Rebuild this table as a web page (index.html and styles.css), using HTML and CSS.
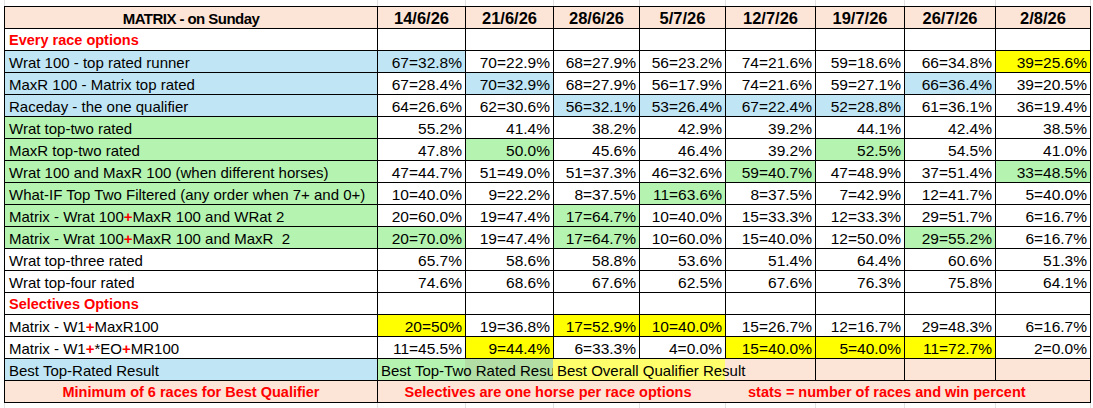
FILE: index.html
```html
<!DOCTYPE html>
<html lang="en">
<head>
<meta charset="utf-8">
<title>MATRIX - on Sunday</title>
<link rel="stylesheet" href="styles.css">
</head>
<body>
<div class="sheet">
  <div class="gridstrip"><span></span><span></span><span></span><span></span><span></span><span></span><span></span><span></span><span></span><span></span><span></span></div>
  <table class="matrix">
    <colgroup><col><col><col><col><col><col><col><col><col></colgroup>
    <tbody>
      <tr class="hdr">
        <td class="title">MATRIX - on Sunday</td>
        <td>14/6/26</td><td>21/6/26</td><td>28/6/26</td><td>5/7/26</td><td>12/7/26</td><td>19/7/26</td><td>26/7/26</td><td>2/8/26</td>
      </tr>
      <tr>
        <td class="lbl section">Every race options</td>
        <td></td><td></td><td></td><td></td><td></td><td></td><td></td><td></td>
      </tr>
      <tr>
        <td class="lbl blue">Wrat 100 - top rated runner</td>
        <td class="blue">67=32.8%</td><td>70=22.9%</td><td>68=27.9%</td><td>56=23.2%</td><td>74=21.6%</td><td>59=18.6%</td><td>66=34.8%</td><td class="yellow">39=25.6%</td>
      </tr>
      <tr>
        <td class="lbl blue">MaxR 100 - Matrix top rated</td>
        <td>67=28.4%</td><td class="blue">70=32.9%</td><td>68=27.9%</td><td>56=17.9%</td><td>74=21.6%</td><td>59=27.1%</td><td class="blue">66=36.4%</td><td>39=20.5%</td>
      </tr>
      <tr>
        <td class="lbl blue">Raceday - the one qualifier</td>
        <td>64=26.6%</td><td>62=30.6%</td><td class="blue">56=32.1%</td><td class="blue">53=26.4%</td><td class="blue">67=22.4%</td><td class="blue">52=28.8%</td><td>61=36.1%</td><td>36=19.4%</td>
      </tr>
      <tr>
        <td class="lbl green">Wrat top-two rated</td>
        <td>55.2%</td><td>41.4%</td><td>38.2%</td><td>42.9%</td><td>39.2%</td><td>44.1%</td><td>42.4%</td><td>38.5%</td>
      </tr>
      <tr>
        <td class="lbl green">MaxR top-two rated</td>
        <td>47.8%</td><td class="green">50.0%</td><td>45.6%</td><td>46.4%</td><td>39.2%</td><td class="green">52.5%</td><td>54.5%</td><td>41.0%</td>
      </tr>
      <tr>
        <td class="lbl green">Wrat 100 and MaxR 100 (when different horses)</td>
        <td>47=44.7%</td><td>51=49.0%</td><td>51=37.3%</td><td>46=32.6%</td><td class="green">59=40.7%</td><td>47=48.9%</td><td>37=51.4%</td><td class="green">33=48.5%</td>
      </tr>
      <tr>
        <td class="lbl green">What-IF Top Two Filtered (any order when 7+ and 0+)</td>
        <td>10=40.0%</td><td>9=22.2%</td><td>8=37.5%</td><td class="green">11=63.6%</td><td>8=37.5%</td><td>7=42.9%</td><td>12=41.7%</td><td>5=40.0%</td>
      </tr>
      <tr>
        <td class="lbl green">Matrix - Wrat 100<b class="plus">+</b>MaxR 100 and WRat 2</td>
        <td>20=60.0%</td><td>19=47.4%</td><td class="green">17=64.7%</td><td>10=40.0%</td><td>15=33.3%</td><td>12=33.3%</td><td>29=51.7%</td><td>6=16.7%</td>
      </tr>
      <tr>
        <td class="lbl green">Matrix - Wrat 100<b class="plus">+</b>MaxR 100 and MaxR&nbsp; 2</td>
        <td class="green">20=70.0%</td><td>19=47.4%</td><td class="green">17=64.7%</td><td>10=60.0%</td><td>15=40.0%</td><td>12=50.0%</td><td class="green">29=55.2%</td><td>6=16.7%</td>
      </tr>
      <tr>
        <td class="lbl">Wrat top-three rated</td>
        <td>65.7%</td><td>58.6%</td><td>58.8%</td><td>53.6%</td><td>51.4%</td><td>64.4%</td><td>60.6%</td><td>51.3%</td>
      </tr>
      <tr>
        <td class="lbl">Wrat top-four rated</td>
        <td>74.6%</td><td>68.6%</td><td>67.6%</td><td>62.5%</td><td>67.6%</td><td>76.3%</td><td>75.8%</td><td>64.1%</td>
      </tr>
      <tr>
        <td class="lbl section">Selectives Options</td>
        <td></td><td></td><td></td><td></td><td></td><td></td><td></td><td></td>
      </tr>
      <tr>
        <td class="lbl">Matrix - W1<b class="plus">+</b>MaxR100</td>
        <td class="yellow">20=50%</td><td>19=36.8%</td><td class="yellow">17=52.9%</td><td class="yellow">10=40.0%</td><td>15=26.7%</td><td>12=16.7%</td><td>29=48.3%</td><td>6=16.7%</td>
      </tr>
      <tr>
        <td class="lbl">Matrix - W1<b class="plus">+</b>*EO<b class="plus">+</b>MR100</td>
        <td>11=45.5%</td><td class="yellow">9=44.4%</td><td>6=33.3%</td><td>4=0.0%</td><td class="yellow">15=40.0%</td><td class="yellow">5=40.0%</td><td class="yellow">11=72.7%</td><td>2=0.0%</td>
      </tr>
      <tr class="best">
        <td class="lbl blue">Best Top-Rated Result</td>
        <td colspan="5" class="split">
          <div class="split-in">
            <span class="best-two">Best Top-Two Rated Result</span>
            <span class="best-overall">Best Overall Qualifier Result</span>
          </div>
        </td>
        <td class="peach"></td><td class="peach"></td><td class="peach"></td>
      </tr>
      <tr class="notes">
        <td class="note-title">Minimum of 6 races for Best Qualifier</td>
        <td colspan="8" class="notes-cell">
          <div class="notes-in">
            <span class="note-a">Selectives are one horse per race options</span>
            <span class="note-b">stats = number of races and win percent</span>
          </div>
        </td>
      </tr>
    </tbody>
  </table>
  <div class="gridstrip"><span></span><span></span><span></span><span></span><span></span><span></span><span></span><span></span><span></span><span></span><span></span></div>
</div>
</body>
</html>
```

FILE: styles.css
```css
* {
  box-sizing: border-box;
}

body {
  margin: 0;
  background: #ffffff;
  color: #000000;
  font-family: "Liberation Sans", Arial, sans-serif;
}

.sheet {
  width: 1093px;
}

.gridstrip {
  display: grid;
  grid-template-columns: 4px 373px 88px 88px 86px 86px 90px 89px 91px 95px 1fr;
  height: 6px;
}

.gridstrip span + span {
  border-left: 1px solid #e1e1e1;
}

.matrix {
  border-collapse: collapse;
  table-layout: fixed;
  margin-left: 4px;
  width: 1087px;
}

.matrix col:nth-child(1) { width: 373px; }
.matrix col:nth-child(2) { width: 88px; }
.matrix col:nth-child(3) { width: 88px; }
.matrix col:nth-child(4) { width: 86px; }
.matrix col:nth-child(5) { width: 86px; }
.matrix col:nth-child(6) { width: 90px; }
.matrix col:nth-child(7) { width: 89px; }
.matrix col:nth-child(8) { width: 91px; }
.matrix col:nth-child(9) { width: 95px; }

.matrix tr {
  height: 22px;
}

.matrix td {
  border: 1px solid #000000;
  padding: 0 3px 1px 3px;
  height: 22px;
  line-height: 17px;
  vertical-align: bottom;
  white-space: nowrap;
  overflow: hidden;
  font-size: 15.5px;
  text-align: right;
  background: #ffffff;
}

.matrix td.lbl {
  text-align: left;
  font-size: 15px;
  padding-left: 4px;
}

.matrix td.section {
  color: #ff0000;
  font-weight: bold;
  font-size: 14.5px;
}

.hdr td {
  background: #fce4d6;
  font-weight: bold;
  font-size: 16.5px;
  text-align: center;
  padding-bottom: 1px;
}

.hdr td.title {
  font-size: 15px;
  letter-spacing: -0.55px;
}

.matrix td.blue { background: #c0e6f5; }
.matrix td.green { background: #b5f4b0; }
.matrix td.yellow { background: #ffff00; }
.matrix td.peach { background: #fce4d6; }

.plus {
  color: #ff0000;
  font-weight: bold;
}

.matrix td.split {
  padding: 0;
  background: #fce4d6;
  vertical-align: top;
}

.split-in {
  display: grid;
  grid-template-columns: 175px 1fr;
  height: 21px;
  font-size: 15px;
  text-align: left;
  line-height: 17px;
}

.best-two {
  background: linear-gradient(to right, #b5f4b0 87px, #b2dea5 87px);
  padding: 3px 0 1px 3px;
  overflow: hidden;
  white-space: nowrap;
}

.best-overall {
  background: linear-gradient(to right, #ffff6b 172px, #fce4d6 172px);
  padding: 3px 0 1px 4px;
  white-space: nowrap;
}

.matrix td.note-title {
  background: #fce4d6;
  color: #ff0000;
  font-weight: bold;
  font-size: 14.5px;
  text-align: center;
}

.matrix td.notes-cell {
  background: #fce4d6;
  color: #ff0000;
  font-weight: bold;
  font-size: 14.5px;
  text-align: left;
  padding: 0 0 1px 0;
}

.notes-in {
  display: grid;
  grid-template-columns: 340px 1fr;
}

.note-a {
  text-align: center;
}

.note-b {
  padding-left: 30px;
}
```
